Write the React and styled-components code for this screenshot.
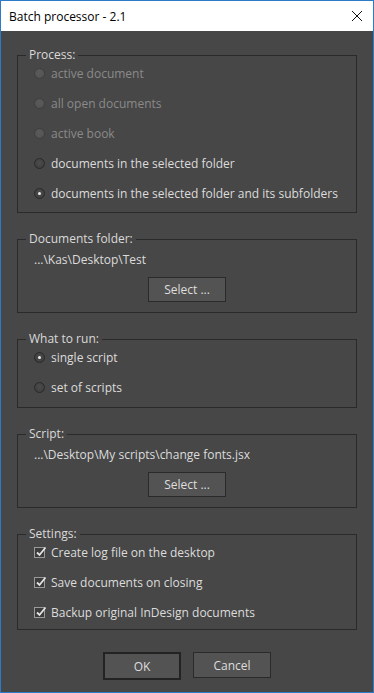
import styled, { createGlobalStyle } from "styled-components";

const GlobalStyle = createGlobalStyle`
  html, body {
    margin: 0;
    padding: 0;
    background: #ffffff;
  }
  * {
    box-sizing: border-box;
  }
`;

const Window = styled.div`
  width: 374px;
  height: 693px;
  display: flex;
  flex-direction: column;
  border: 1px solid #2b7bc8;
  font-family: "Open Sans", "Noto Sans", sans-serif;
  font-size: 12px;
`;

const TitleBar = styled.div`
  height: 30px;
  flex: none;
  display: flex;
  align-items: center;
  justify-content: space-between;
  padding: 0 10px 0 8px;
  background: #ffffff;
  color: #000000;
`;

const Title = styled.span`
  font-size: 12px;
`;

const CloseBtn = styled.div`
  width: 12px;
  height: 12px;
  display: flex;
`;

const Body = styled.div`
  flex: 1;
  display: flex;
  flex-direction: column;
  gap: 18px;
  background: #474747;
  padding: 16px 16px 0 16px;
`;

const Panel = styled.fieldset`
  margin: 0;
  padding: 0;
  border: 1px solid #2a2a2a;
  min-width: 0;
`;

const Legend = styled.legend`
  margin-left: 8px;
  padding: 0 3px;
  line-height: 16px;
  color: #dadada;
`;

const Content = styled.div`
  display: flex;
  flex-direction: column;
  gap: ${(p) => p.$gap || 10}px;
  padding: ${(p) => p.$top || 0}px 16px ${(p) => p.$bottom || 9}px 16px;
`;

const Row = styled.label`
  height: 20px;
  display: flex;
  align-items: center;
  gap: 6px;
  color: ${(p) => (p.$disabled ? "#8a8a8a" : "#dcdcdc")};
`;

const Radio = styled.span`
  position: relative;
  width: 11px;
  height: 11px;
  flex: none;
  border-radius: 50%;
  border: 1px solid ${(p) => (p.$disabled ? "#3e3e3e" : "#292929")};
  background: ${(p) =>
    p.$disabled
      ? "radial-gradient(circle at 50% 40%, #5a5a5a, #525252)"
      : "radial-gradient(circle at 50% 40%, #4c4c4c, #3b3b3b)"};

  &::after {
    content: "";
    display: ${(p) => (p.$checked ? "block" : "none")};
    position: absolute;
    left: 3px;
    top: 3px;
    width: 3px;
    height: 3px;
    border-radius: 50%;
    background: #ececec;
  }
`;

const Check = styled.span`
  position: relative;
  width: 11px;
  height: 11px;
  flex: none;
  border: 1px solid #9a9a9a;
  background: #3c3c3c;

  svg {
    position: absolute;
    left: 0px;
    top: -3px;
  }
`;

const Path = styled.div`
  height: 20px;
  display: flex;
  align-items: center;
  color: #dcdcdc;
`;

const ButtonLine = styled.div`
  display: flex;
  justify-content: center;
  gap: 12px;
`;

const Button = styled.button`
  width: 78px;
  height: ${(p) => p.$h || 25}px;
  padding: 0;
  font-family: inherit;
  font-size: 12px;
  color: #dedede;
  background: #535353;
  border: ${(p) => (p.$default ? "2px solid #232323" : "1px solid #2a2a2a")};
`;

const Footer = styled.div`
  margin-top: 4px;
  display: flex;
  justify-content: center;
  gap: 12px;
`;

const RadioRow = ({ label, checked, disabled }) => (
  <Row $disabled={disabled}>
    <Radio $checked={checked} $disabled={disabled} />
    {label}
  </Row>
);

const CheckRow = ({ label }) => (
  <Row>
    <Check>
      <svg width="13" height="13" viewBox="0 0 13 13">
        <path d="M2 7.5 L4.5 10 L10.5 2.5" fill="none" stroke="#e4e4e4" strokeWidth="1.8" />
      </svg>
    </Check>
    {label}
  </Row>
);

export default function App() {
  return (
    <Window>
      <GlobalStyle />
      <TitleBar>
        <Title>Batch processor - 2.1</Title>
        <CloseBtn>
          <svg width="12" height="12" viewBox="0 0 12 12">
            <path d="M1 1 L11 11 M11 1 L1 11" stroke="#111" strokeWidth="1" />
          </svg>
        </CloseBtn>
      </TitleBar>
      <Body>
        <Panel>
          <Legend>Process:</Legend>
          <Content>
            <RadioRow label="active document" disabled />
            <RadioRow label="all open documents" disabled />
            <RadioRow label="active book" disabled />
            <RadioRow label="documents in the selected folder" />
            <RadioRow label="documents in the selected folder and its subfolders" checked />
          </Content>
        </Panel>

        <Panel>
          <Legend>Documents folder:</Legend>
          <Content $top={2} $gap={8} $bottom={10}>
            <Path>...\Kas\Desktop\Test</Path>
            <ButtonLine>
              <Button>Select ...</Button>
            </ButtonLine>
          </Content>
        </Panel>

        <Panel>
          <Legend>What to run:</Legend>
          <Content $bottom={10}>
            <RadioRow label="single script" checked />
            <RadioRow label="set of scripts" />
          </Content>
        </Panel>

        <Panel>
          <Legend>Script:</Legend>
          <Content $top={2} $gap={8} $bottom={10}>
            <Path>...\Desktop\My scripts\change fonts.jsx</Path>
            <ButtonLine>
              <Button>Select ...</Button>
            </ButtonLine>
          </Content>
        </Panel>

        <Panel>
          <Legend>Settings:</Legend>
          <Content $bottom={7}>
            <CheckRow label="Create log file on the desktop" />
            <CheckRow label="Save documents on closing" />
            <CheckRow label="Backup original InDesign documents" />
          </Content>
        </Panel>

        <Footer>
          <Button $default $h={28}>OK</Button>
          <Button $h={26}>Cancel</Button>
        </Footer>
      </Body>
    </Window>
  );
}
